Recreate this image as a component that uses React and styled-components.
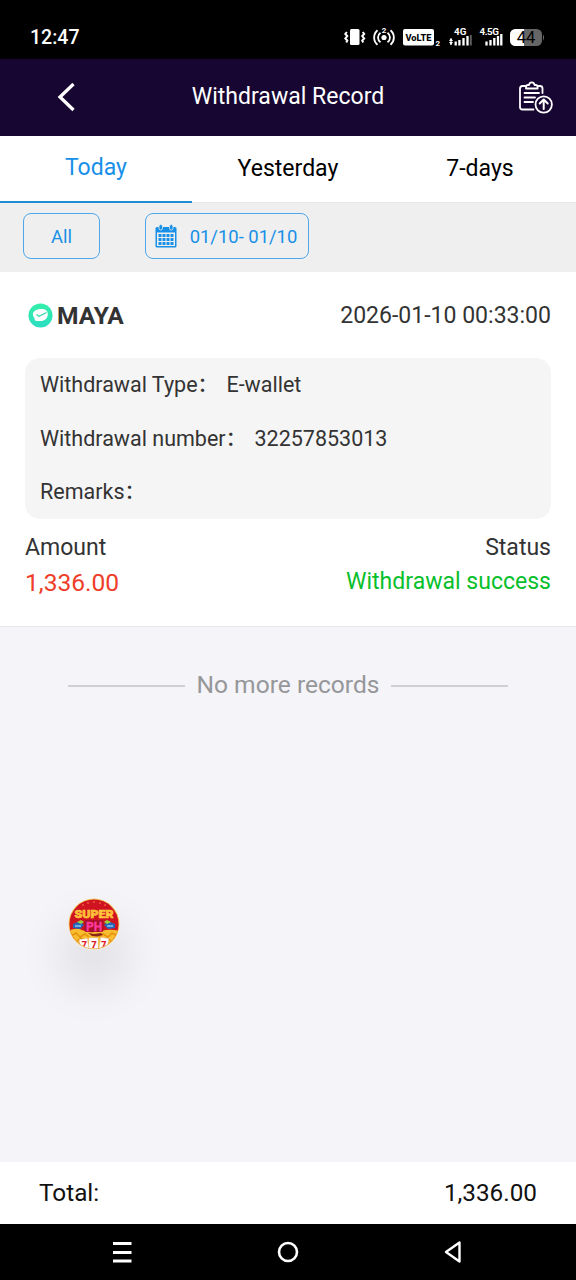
import React from "react";
import styled, { createGlobalStyle } from "styled-components";

const GlobalStyle = createGlobalStyle`
  * {
    box-sizing: border-box;
  }

  body {
    margin: 0;
    background: #000000;
    font-family: Roboto, "Noto Sans CJK SC", sans-serif;
  }
`;

const tabs = ["Today", "Yesterday", "7-days"];

const details = [
  { label: "Withdrawal Type", value: "E-wallet" },
  { label: "Withdrawal number", value: "32257853013" },
  { label: "Remarks", value: "" },
];

function StatusIcons() {
  return (
    <svg width="208" height="24" viewBox="0 0 208 24" fill="none" fontFamily="Roboto, sans-serif">
      {/* vibrate */}
      <rect x="6" y="4" width="9.5" height="16" rx="1.5" fill="#fff" />
      <path d="M2.8 7L1.3 9l2 2-2 2.5 2 2-1 2M18.7 7l1.5 2-2 2 2 2.5-2 2 1 2" stroke="#fff" strokeWidth="2" />
      {/* hotspot */}
      <circle cx="40" cy="12.5" r="2.6" fill="#fff" />
      <path d="M36.5 17.2a5.7 5.7 0 0 1 0-9.4M43.5 17.2a5.7 5.7 0 0 0 0-9.4M33.5 19.8a9.6 9.6 0 0 1 0-14.6M46.5 19.8a9.6 9.6 0 0 0 0-14.6" stroke="#fff" strokeWidth="1.8" />
      <text x="40" y="7.5" fontSize="8" fontWeight="700" fill="#fff" textAnchor="middle">2</text>
      {/* volte */}
      <rect x="59" y="4" width="31" height="16.5" rx="2" fill="#fff" />
      <text x="74.5" y="15.8" fontSize="9.6" fontWeight="800" fill="#000" textAnchor="middle" textLength="26" lengthAdjust="spacingAndGlyphs">VoLTE</text>
      <text x="91.5" y="20.6" fontSize="8" fontWeight="700" fill="#fff">2</text>
      {/* signals */}
      <text x="110" y="10" fontSize="9.8" fontWeight="700" fill="#fff" textLength="12.5">4G</text>
      <path d="M107 13.6v6.4" stroke="#fff" strokeWidth="1.2" />
      <path d="M105 16l2-3 2 3zM105 17l2 3 2-3z" fill="#fff" />
      <path d="M111.7 20.5v-4M115.4 20.5v-5.5M119.5 20.5v-7.5M123.5 20.5v-9.5" stroke="#fff" strokeWidth="2.3" />
      <path d="M126.8 20.5V10" stroke="#5c5c5c" strokeWidth="2" />
      <text x="135.5" y="10" fontSize="9.8" fontWeight="700" fill="#fff" textLength="19.5">4.5G</text>
      <path d="M142.5 20.5v-4M146.5 20.5v-5.5M150.3 20.5v-7.5M154 20.5v-9.5M157.3 20.5V9" stroke="#fff" strokeWidth="2.3" />
      {/* battery */}
      <rect x="166" y="4" width="32" height="17" rx="5.5" fill="#666" />
      <path d="M171.5 4H180v17h-8.5a5.5 5.5 0 0 1-5.5-5.5v-6a5.5 5.5 0 0 1 5.5-5.5z" fill="#fff" />
      <path d="M199 9.5a5 5 0 0 1 0 6z" fill="#666" />
      <text x="182" y="18.3" fontSize="16.5" fill="#000" textAnchor="middle">44</text>
    </svg>
  );
}

function BackIcon() {
  return (
    <svg width="18" height="30" viewBox="0 0 18 30" fill="none">
      <path d="M16.5 1L3 14l13.5 13" stroke="#fff" strokeWidth="3.3" />
    </svg>
  );
}

function RecordIcon() {
  return (
    <svg width="36" height="34" viewBox="0 0 36 34" fill="none" stroke="#fff" strokeWidth="1.8" strokeLinecap="round" strokeLinejoin="round">
      <path d="M7.5 5H4.5Q2 5 2 7.5v18.5Q2 28.5 4.5 28.5H15.5M20.5 5h1.5q2.5 0 2.5 2.5v4.5" />
      <path d="M8 7.5V6q0-2 2-2h1q.5-2.7 2.8-2.7T16.6 4h1q2 0 2 2v1.5z" />
      <path d="M6.5 12h14.5M6.5 16.5h10.5M6.5 21h8.5" />
      <circle cx="25.7" cy="23.5" r="8.2" />
      <path d="M25.7 28v-9M21.7 22.5l4-4 4 4" strokeWidth="2" />
    </svg>
  );
}

function CalendarIcon() {
  return (
    <svg width="22" height="24" viewBox="0 0 22 24">
      <rect x="0.5" y="3" width="21" height="20.5" rx="1.5" fill="#1890e8" />
      <rect x="2" y="8.5" width="18" height="13.5" fill="#efefef" />
      <g fill="#1890e8">
        {[10, 14, 18].map((y) =>
          [3.5, 7.5, 11.5, 15.5].map((x) => <rect key={`${x}-${y}`} x={x} y={y} width="3" height="3" />)
        )}
      </g>
      <rect x="4" y="0.5" width="3.5" height="5.5" rx="1.7" fill="#1890e8" stroke="#efefef" strokeWidth="0.8" />
      <rect x="14.5" y="0.5" width="3.5" height="5.5" rx="1.7" fill="#1890e8" stroke="#efefef" strokeWidth="0.8" />
    </svg>
  );
}

function MayaLogo() {
  return (
    <svg width="25" height="25" viewBox="0 0 25 25" fill="none">
      <defs>
        <linearGradient id="maya" x1="0" y1="0" x2="0" y2="1">
          <stop offset="0" stopColor="#35efaa" />
          <stop offset="1" stopColor="#2bdcc0" />
        </linearGradient>
      </defs>
      <circle cx="12.5" cy="12.5" r="12" fill="url(#maya)" />
      <path d="M5 10.5C5.5 7.5 10 5.5 14.5 6c3.5.4 5.500 2.500 5.300 5.500-.3 4-3 6.500-7.300 6.600-2.500.1-4.500-.2-6-.9.6-.8.3-1.400-.3-2.400C5.200 13.300 4.800 12 5 10.500z" fill="#fff" />
      <path d="M8.5 11.5l2.5 1.7 7.500-3.700" stroke="#2ed8ad" strokeWidth="1.2" />
    </svg>
  );
}

function SuperBadge() {
  return (
    <svg width="52" height="52" viewBox="0 0 52 52" fontFamily="Roboto, sans-serif" textAnchor="middle">
      <defs>
        <clipPath id="coin">
          <circle cx="26" cy="26" r="24.5" />
        </clipPath>
      </defs>
      <circle cx="26" cy="26" r="25.5" fill="#f0c45c" />
      <g clipPath="url(#coin)">
        <rect width="52" height="52" fill="#d01320" />
        <path d="M0 33q8-4 14-1t12 2 12-2 14 1v20H0z" fill="#f9bd30" />
        <path d="M3 38l5-3 4 4 5-3 4 3M49 38l-5-3-4 4-5-3-4 3M9 43l4-3 4 3M43 43l-4-3-4 3" fill="none" stroke="#e5930f" strokeWidth="1.5" />
        <path d="M20 35l6 1 7-1 2 2-6 1.500-5-.5z" fill="#8a2816" />
        <path d="M5 26l7-3 4 4-4 4-7-1zM47 26l-7-3-4 4 4 4 7-1z" fill="#2467b8" />
        <path d="M9 24l4-2 3 2-3 2zM43 24l-4-2-3 2 3 2z" fill="#9fd13c" />
        <path d="M7 28h6M39 28h6" stroke="#8fc4f4" strokeWidth="1.5" />
        <g fill="#fff" stroke="#e5c8bd" strokeWidth="0.5">
          <rect x="12" y="41" width="8" height="11" transform="rotate(-8 16 46)" />
          <rect x="21" y="40" width="9" height="12" />
          <rect x="32" y="40" width="8" height="11" transform="rotate(8 36 45)" />
        </g>
        <g fill="#ff8a4a">
          <circle cx="20" cy="5" r="0.8" />
          <circle cx="26" cy="4" r="0.8" />
          <circle cx="32" cy="5" r="0.8" />
          <circle cx="37" cy="7" r="0.8" />
          <circle cx="15" cy="7" r="0.8" />
        </g>
        <text x="26" y="49.5" fontSize="9.5" fontWeight="900" fill="#dc1c2c" textLength="25">777</text>
      </g>
      <rect x="16.5" y="22" width="19" height="12" rx="2" fill="#a80f2a" />
      <text x="26" y="20.3" fontSize="10.5" fontWeight="900" fill="#ffb52a" stroke="#ffd54a" strokeWidth="0.5" textLength="39" lengthAdjust="spacingAndGlyphs">SUPER</text>
      <text x="26" y="32.500" fontSize="12" fontWeight="700" fill="#ff3aa0" stroke="#ff3aa0" strokeWidth="0.3">PH</text>
    </svg>
  );
}

export default function App() {
  return (
    <Screen>
      <GlobalStyle />
      <StatusBar>
        <Clock>12:47</Clock>
        <StatusIcons />
      </StatusBar>
      <Header>
        <IconButton aria-label="Back">
          <BackIcon />
        </IconButton>
        <Title>Withdrawal Record</Title>
        <IconButton aria-label="Records" $end>
          <RecordIcon />
        </IconButton>
      </Header>
      <Tabs>
        {tabs.map((tab, i) => (
          <Tab key={tab} $active={i === 0}>{tab}</Tab>
        ))}
      </Tabs>
      <Filters>
        <FilterButton $width={77}>All</FilterButton>
        <FilterButton $width={164} $inset={2}>
          <CalendarIcon />
          <span>01/10- 01/10</span>
        </FilterButton>
      </Filters>
      <Record>
        <RecordHead>
          <Wallet>
            <MayaLogo />
            <WalletName>MAYA</WalletName>
          </Wallet>
          <span>2026-01-10 00:33:00</span>
        </RecordHead>
        <Details>
          {details.map(({ label, value }) => (
            <DetailRow key={label}>{label}<Colon>：</Colon> {value}</DetailRow>
          ))}
        </Details>
        <Summary>
          <SummaryColumn>
            <span>Amount</span>
            <Amount>1,336.00</Amount>
          </SummaryColumn>
          <SummaryColumn $end>
            <span>Status</span>
            <Success>Withdrawal success</Success>
          </SummaryColumn>
        </Summary>
      </Record>
      <Content>
        <EndOfList>
          <Rule />
          <span>No more records</span>
          <Rule />
        </EndOfList>
      </Content>
      <Total>
        <span>Total:</span>
        <span>1,336.00</span>
      </Total>
      <NavBar>
        <svg width="20" height="22" viewBox="0 0 20 22" stroke="#fff" strokeWidth="3">
          <path d="M1 2.5h18.5M1 11.5h18.5M1 20h18.5" />
        </svg>
        <svg width="22" height="22" viewBox="0 0 22 22" fill="none" stroke="#fff" strokeWidth="2.6">
          <circle cx="11" cy="11" r="9" />
        </svg>
        <svg width="18" height="24" viewBox="0 0 18 24" fill="none" stroke="#fff" strokeWidth="2.4" strokeLinejoin="round">
          <path d="M15.5 2.5v19L2 12z" />
        </svg>
      </NavBar>
      <FloatingBadge>
        <SuperBadge />
      </FloatingBadge>
    </Screen>
  );
}

const Screen = styled.div`
  position: relative;
  width: 576px;
  height: 1280px;
  display: flex;
  flex-direction: column;
  overflow: hidden;
  background: #f4f4f9;
  color: #333333;
`;

const StatusBar = styled.div`
  height: 59px;
  padding: 15px 24px 0 30px;
  display: flex;
  justify-content: space-between;
  align-items: center;
  background: #000000;
`;

const Clock = styled.span`
  color: #ffffff;
  font-size: 19.5px;
  font-weight: 500;
`;

const Header = styled.header`
  height: 77px;
  padding: 0 22px 0 57px;
  display: grid;
  grid-template-columns: 36px 1fr 71px;
  align-items: center;
  background: #180632;
`;

const IconButton = styled.button`
  padding: 0;
  display: flex;
  justify-content: ${({ $end }) => ($end ? "flex-end" : "flex-start")};
  border: 0;
  background: none;
`;

const Title = styled.h1`
  margin: 0 0 3px;
  color: #ffffff;
  font-size: 23.04px;
  font-weight: 400;
  text-align: center;
`;

const Tabs = styled.nav`
  height: 67px;
  display: grid;
  grid-template-columns: repeat(3, 1fr);
  background: #ffffff;
`;

const Tab = styled.button`
  padding: ${({ $active }) => ($active ? "0 0 2px" : "0 0 1px")};
  border: 0;
  border-bottom: ${({ $active }) => ($active ? "2px solid #1f8ed0" : "1px solid #e8e8e8")};
  background: none;
  color: ${({ $active }) => ($active ? "#1890e8" : "#000000")};
  font-family: inherit;
  font-size: 23.04px;
`;

const Filters = styled.div`
  height: 69px;
  padding: 10px 23px;
  display: flex;
  gap: 45px;
  background: #efefef;
`;

const FilterButton = styled.button`
  width: ${({ $width }) => $width}px;
  height: 46px;
  padding: 0 ${({ $inset = 0 }) => $inset}px 0 0;
  display: flex;
  justify-content: center;
  align-items: center;
  gap: 13px;
  border: 1px solid #4fa6e8;
  border-radius: 8px;
  background: none;
  color: #1890e8;
  font-family: inherit;
  font-size: 18.432px;
`;

const Record = styled.section`
  height: 355px;
  padding: 0 25px;
  border-bottom: 1px solid #e6e6ea;
  background: #ffffff;
  font-size: 23.04px;
`;

const RecordHead = styled.div`
  height: 87px;
  display: flex;
  justify-content: space-between;
  align-items: center;
`;

const Wallet = styled.div`
  padding-left: 3px;
  display: flex;
  align-items: center;
  gap: 4px;
`;

const WalletName = styled.strong`
  font-size: 24.576px;
  font-weight: 700;
`;

const Details = styled.div`
  height: 161px;
  margin-top: -1px;
  padding: 0 15px;
  border-radius: 15px;
  background: #f5f5f5;
  font-size: 21.504px;
`;

const DetailRow = styled.div`
  height: 53.5px;
  line-height: 53.5px;
  white-space: nowrap;
`;

const Colon = styled.span`
  width: 23.5px;
  display: inline-block;
  font-size: 20px;
  font-weight: 500;
  line-height: 1;
`;

const Summary = styled.div`
  padding-top: 12px;
  display: flex;
  justify-content: space-between;
`;

const SummaryColumn = styled.div`
  display: flex;
  flex-direction: column;
  align-items: ${({ $end }) => ($end ? "flex-end" : "flex-start")};
  line-height: 34px;
`;

const Amount = styled.span`
  color: #ee3d28;
  font-size: 24.576px;
  line-height: 36px;
`;

const Success = styled.span`
  color: #08c02b;
`;

const Content = styled.main`
  flex: 1;
`;

const EndOfList = styled.div`
  height: 114px;
  display: flex;
  justify-content: center;
  align-items: center;
  gap: 11.5px;
  color: #969799;
  font-size: 24.576px;
`;

const Rule = styled.i`
  width: 117px;
  height: 2px;
  margin-top: 4px;
  background: #cfcfd4;
`;

const Total = styled.footer`
  height: 62px;
  padding: 0 39px 1px;
  display: flex;
  justify-content: space-between;
  align-items: center;
  background: #ffffff;
  color: #111111;
  font-size: 24.3px;
`;

const NavBar = styled.div`
  height: 56px;
  padding: 0 114px 0 112px;
  display: flex;
  justify-content: space-between;
  align-items: center;
  background: #000000;
`;

const FloatingBadge = styled.div`
  position: absolute;
  top: 898px;
  left: 68px;
  width: 52px;
  height: 52px;
  border-radius: 50%;
  box-shadow: 0 30px 46px 8px rgba(0, 0, 0, 0.09);

  svg {
    display: block;
  }
`;
